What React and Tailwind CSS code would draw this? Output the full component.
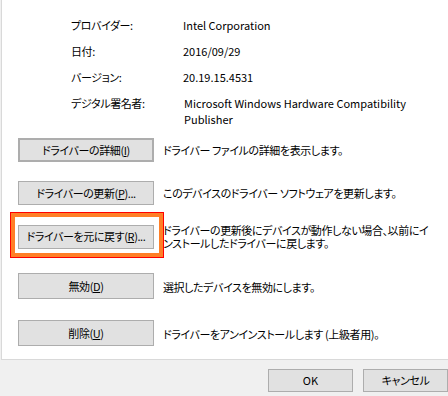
export default function App() {
  const font = "font-['Noto_Sans_CJK_JP','Noto_Sans',sans-serif] [font-feature-settings:'palt']";
  const btn =
    "flex items-center justify-center whitespace-nowrap w-[136px] h-[24px] bg-[#e1e1e1] border border-[#adadad] text-[11px] tracking-[-0.4px] text-black";
  const Row = ({ top, label, children }) => (
    <div className={`flex items-center ${top}`}>
      {label}
      <div className="ml-[9px] whitespace-nowrap text-[11px] tracking-[-0.4px] leading-[13px] text-black">
        {children}
      </div>
    </div>
  );
  return (
    <div className={`relative w-[448px] h-[396px] bg-[#f0f0f0] overflow-hidden ${font}`}>
      <div className="ml-px h-[360px] bg-white border-l border-b border-[#d9d9d9] relative">
        {/* info */}
        <div className="pt-[17px] pl-[69px] text-[11px] leading-[16px] text-black">
          <div className="flex h-[26px]">
            <div className="w-[112px] tracking-[-0.4px]">プロバイダー:</div>
            <div>Intel Corporation</div>
          </div>
          <div className="flex h-[26px]">
            <div className="w-[112px] tracking-[-0.4px]">日付:</div>
            <div>2016/09/29</div>
          </div>
          <div className="flex h-[26px]">
            <div className="w-[112px] tracking-[-0.4px]">バージョン:</div>
            <div>20.19.15.4531</div>
          </div>
          <div className="flex">
            <div className="w-[113px] tracking-[-0.4px]">デジタル署名者:</div>
            <div>
              Microsoft Windows Hardware Compatibility
              <br />
              Publisher
            </div>
          </div>
        </div>

        {/* buttons */}
        <div className="absolute left-[16px] top-[138px] flex flex-col">
          <Row
            label={
              <div className={`${btn} border-2 border-[#0078d7]`}>
                ドライバーの詳細(<u>I</u>)
              </div>
            }
          >
            ドライバー ファイルの詳細を表示します。
          </Row>
          <Row
            top="mt-[19px]"
            label={
              <div className={btn}>
                ドライバーの更新(<u>P</u>)...
              </div>
            }
          >
            このデバイスのドライバー ソフトウェアを更新します。
          </Row>
          <Row
            top="mt-[18px]"
            label={
              <div className={btn}>
                ドライバーを元に戻す(<u>R</u>)...
              </div>
            }
          >
            <div className="pt-[1px]">
              ドライバーの更新後にデバイスが動作しない場合、以前にイ
              <br />
              ンストールしたドライバーに戻します。
            </div>
          </Row>
          <Row
            top="mt-[23px]"
            label={
              <div className={`${btn} h-[26px]`}>
                無効(<u>D</u>)
              </div>
            }
          >
            <div className="pt-[2px]">選択したデバイスを無効にします。</div>
          </Row>
          <Row
            top="mt-[21px]"
            label={
              <div className={`${btn} h-[26px]`}>
                削除(<u>U</u>)
              </div>
            }
          >
            <div className="pt-[2px]">ドライバーをアンインストールします (上級者用)。</div>
          </Row>
        </div>

        {/* highlight annotation */}
        <div className="absolute left-[8px] top-[212px] w-[154px] h-[46px] border border-[#ff0000]">
          <div className="w-full h-full border-4 border-[#ff7f27]" />
        </div>
      </div>

      <div className="flex gap-[10px] pl-[268px] pt-[9px]">
        <div className="flex items-center justify-center w-[85px] h-[23px] bg-[#e1e1e1] border border-[#adadad] text-[11px] text-black">
          OK
        </div>
        <div className="flex items-center justify-center shrink-0 w-[85px] h-[23px] bg-[#e1e1e1] border border-[#adadad] text-[11px] tracking-[-0.4px] text-black">
          キャンセル
        </div>
      </div>
    </div>
  );
}
